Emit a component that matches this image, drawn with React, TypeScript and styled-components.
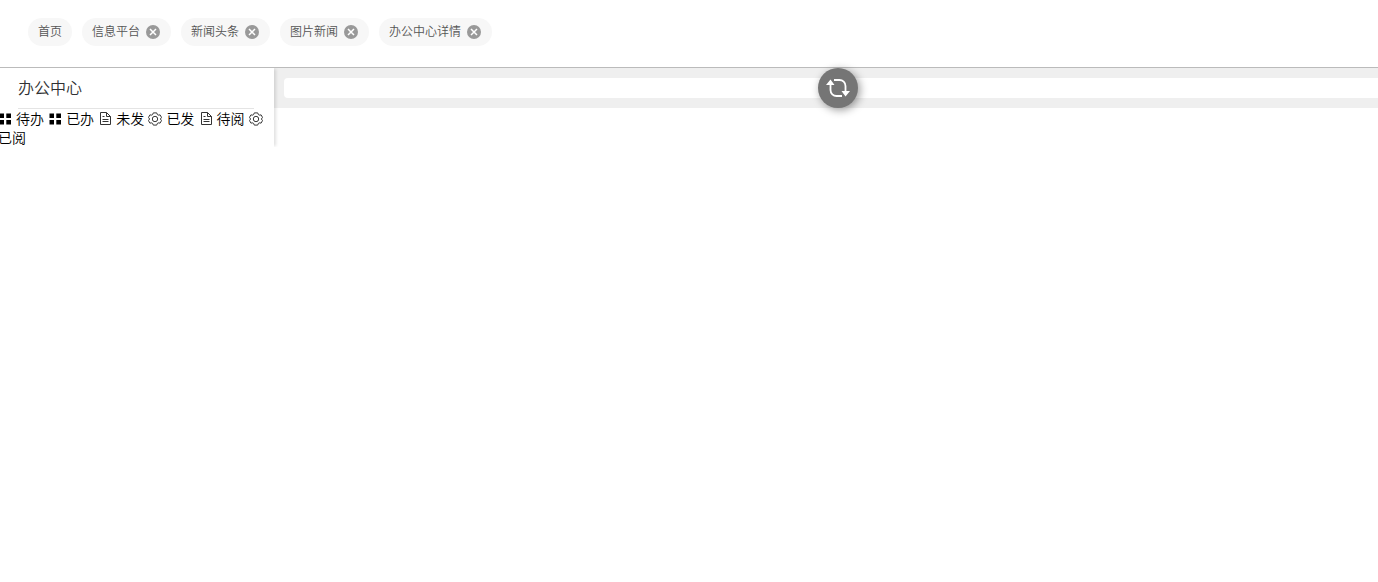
import React from "react";
import styled, { createGlobalStyle } from "styled-components";

const GlobalStyle = createGlobalStyle`
  *, *::before, *::after { box-sizing: border-box; }
  body {
    margin: 0;
    background: #fff;
    color: #000;
    font-family: "Noto Sans CJK SC", sans-serif;
    font-weight: 350;
    font-size: 14px;
  }
`;

const Page = styled.div`
  overflow-x: clip;
`;

const TabBar = styled.header`
  display: flex;
  gap: 10px;
  padding: 18px 28px 21px;
  border-bottom: 1px solid #bbb;
`;

const Tab = styled.div<{ $closable?: boolean }>`
  display: flex;
  align-items: center;
  gap: 6px;
  height: 28px;
  padding: 0 ${(p) => (p.$closable ? 11 : 10)}px 0 10px;
  border-radius: 14px;
  background: #f7f7f7;
`;

const TabLink = styled.a`
  color: #555;
  font-size: 12px;
  line-height: 26px;
  padding-bottom: 2px;
  text-decoration: none;
  white-space: nowrap;
`;

const CloseButton = styled.button`
  display: block;
  width: 14px;
  height: 14px;
  padding: 0;
  border: 0;
  background: none;
  cursor: pointer;

  svg { display: block; }
`;

const Body = styled.div`
  display: flex;
  align-items: flex-start;
`;

const Sidebar = styled.aside`
  position: relative;
  z-index: 1;
  flex: 0 0 274px;
  background: #fff;
  box-shadow: 3px 0 3px -1px rgba(0, 0, 0, 0.12);
  clip-path: inset(0 -8px 0 0);
`;

const SidebarTitle = styled.h1`
  margin: 0 20px 0 18px;
  padding-bottom: 2px;
  border-bottom: 1px solid #e4e4e4;
  color: #303133;
  font-size: 16px;
  font-weight: 350;
  line-height: 38px;
`;

const Menu = styled.nav`
  margin-left: -2px;
  line-height: 19px;
`;

const MenuLink = styled.a`
  margin-right: 1px;
  color: #000;
  text-decoration: none;

  svg {
    width: 14px;
    height: 14px;
    margin-right: 4px;
    vertical-align: -2px;
  }
`;

const Main = styled.main`
  position: relative;
  flex: 1 0 auto;
  margin-right: -24px;
  padding: 10px;
  background: #efefef;
`;

const Panel = styled.section`
  height: 20px;
  border-radius: 4px;
  background: #fff;
`;

const RefreshButton = styled.button`
  position: absolute;
  top: 0;
  left: calc(50% - 20px);
  display: flex;
  align-items: center;
  justify-content: center;
  width: 40px;
  height: 40px;
  padding: 0;
  border: 0;
  border-radius: 50%;
  background: #757575;
  box-shadow: 2px 2px 8px rgba(0, 0, 0, 0.4);
  cursor: pointer;
`;

const CloseIcon = () => (
  <svg width="14" height="14" viewBox="0 0 14 14" aria-hidden="true">
    <circle cx="7" cy="7" r="7" fill="#999" />
    <path d="M4 4l6 6M10 4L4 10" stroke="#fff" strokeWidth="1.5" />
  </svg>
);

const GridIcon = () => (
  <svg viewBox="0 0 14 14" aria-hidden="true">
    <path d="M1.5 1.5H6V6H1.5zM8.3 1.5H13V6H8.3zM1.5 8H6v4.5H1.5zM8.3 8H13v4.5H8.3z" fill="#000" />
  </svg>
);

const DocumentIcon = () => (
  <svg viewBox="0 0 14 14" fill="none" stroke="#333" strokeWidth="1" aria-hidden="true">
    <path d="M2.5 .5h6l4 4v8h-10zM8.5 .5v4h4M4.5 4.5h2M4.5 7.5h6M4.5 9.5h6" />
  </svg>
);

const SettingIcon = () => (
  <svg viewBox="0 0 14 14" fill="none" stroke="#222" strokeWidth="0.9" strokeLinejoin="round" aria-hidden="true">
    <path d="M5.3 .9h3.4l.7 1.7.8.5 1.9-.2 1.4 2.5L12.4 7l1.1 1.6-1.4 2.5-1.9-.2-.8.5-.7 1.7H5.3l-.7-1.7-.8-.5-1.9.2L.5 8.6 1.6 7 .5 5.4l1.4-2.5 1.9.2.8-.5z" />
    <circle cx="7" cy="7" r="2.7" />
  </svg>
);

const RefreshIcon = () => (
  <svg width="24" height="24" viewBox="0 0 24 24" fill="none" aria-hidden="true">
    <path
      d="M8 4h5.5c3.2 0 6 2.6 6 6v6M16 20h-5.5c-3.2 0-6-2.6-6-6V8"
      stroke="#fff"
      strokeWidth="1.8"
    />
    <path d="M0 9l4.5-5.5L8.5 9zM15.5 15H24l-4.5 5.5z" fill="#fff" />
  </svg>
);

const tabs = [
  { label: "首页", closable: false },
  { label: "信息平台", closable: true },
  { label: "新闻头条", closable: true },
  { label: "图片新闻", closable: true },
  { label: "办公中心详情", closable: true },
];

const menuItems = [
  { label: "待办", Icon: GridIcon },
  { label: "已办", Icon: GridIcon },
  { label: "未发", Icon: DocumentIcon },
  { label: "已发", Icon: SettingIcon },
  { label: "待阅", Icon: DocumentIcon },
  { label: "已阅", Icon: SettingIcon },
];

export default function App() {
  return (
    <Page>
      <GlobalStyle />
      <TabBar>
        {tabs.map(({ label, closable }) => (
          <Tab key={label} $closable={closable}>
            <TabLink href="#">{label}</TabLink>
            {closable && (
              <CloseButton type="button" aria-label={`关闭${label}`}>
                <CloseIcon />
              </CloseButton>
            )}
          </Tab>
        ))}
      </TabBar>
      <Body>
        <Sidebar>
          <SidebarTitle>办公中心</SidebarTitle>
          <Menu>
            {menuItems.map(({ label, Icon }) => (
              <React.Fragment key={label}>
                <MenuLink href="#">
                  <Icon />
                  {label}
                </MenuLink>{" "}
              </React.Fragment>
            ))}
          </Menu>
        </Sidebar>
        <Main>
          <Panel />
          <RefreshButton type="button" aria-label="刷新">
            <RefreshIcon />
          </RefreshButton>
        </Main>
      </Body>
    </Page>
  );
}
